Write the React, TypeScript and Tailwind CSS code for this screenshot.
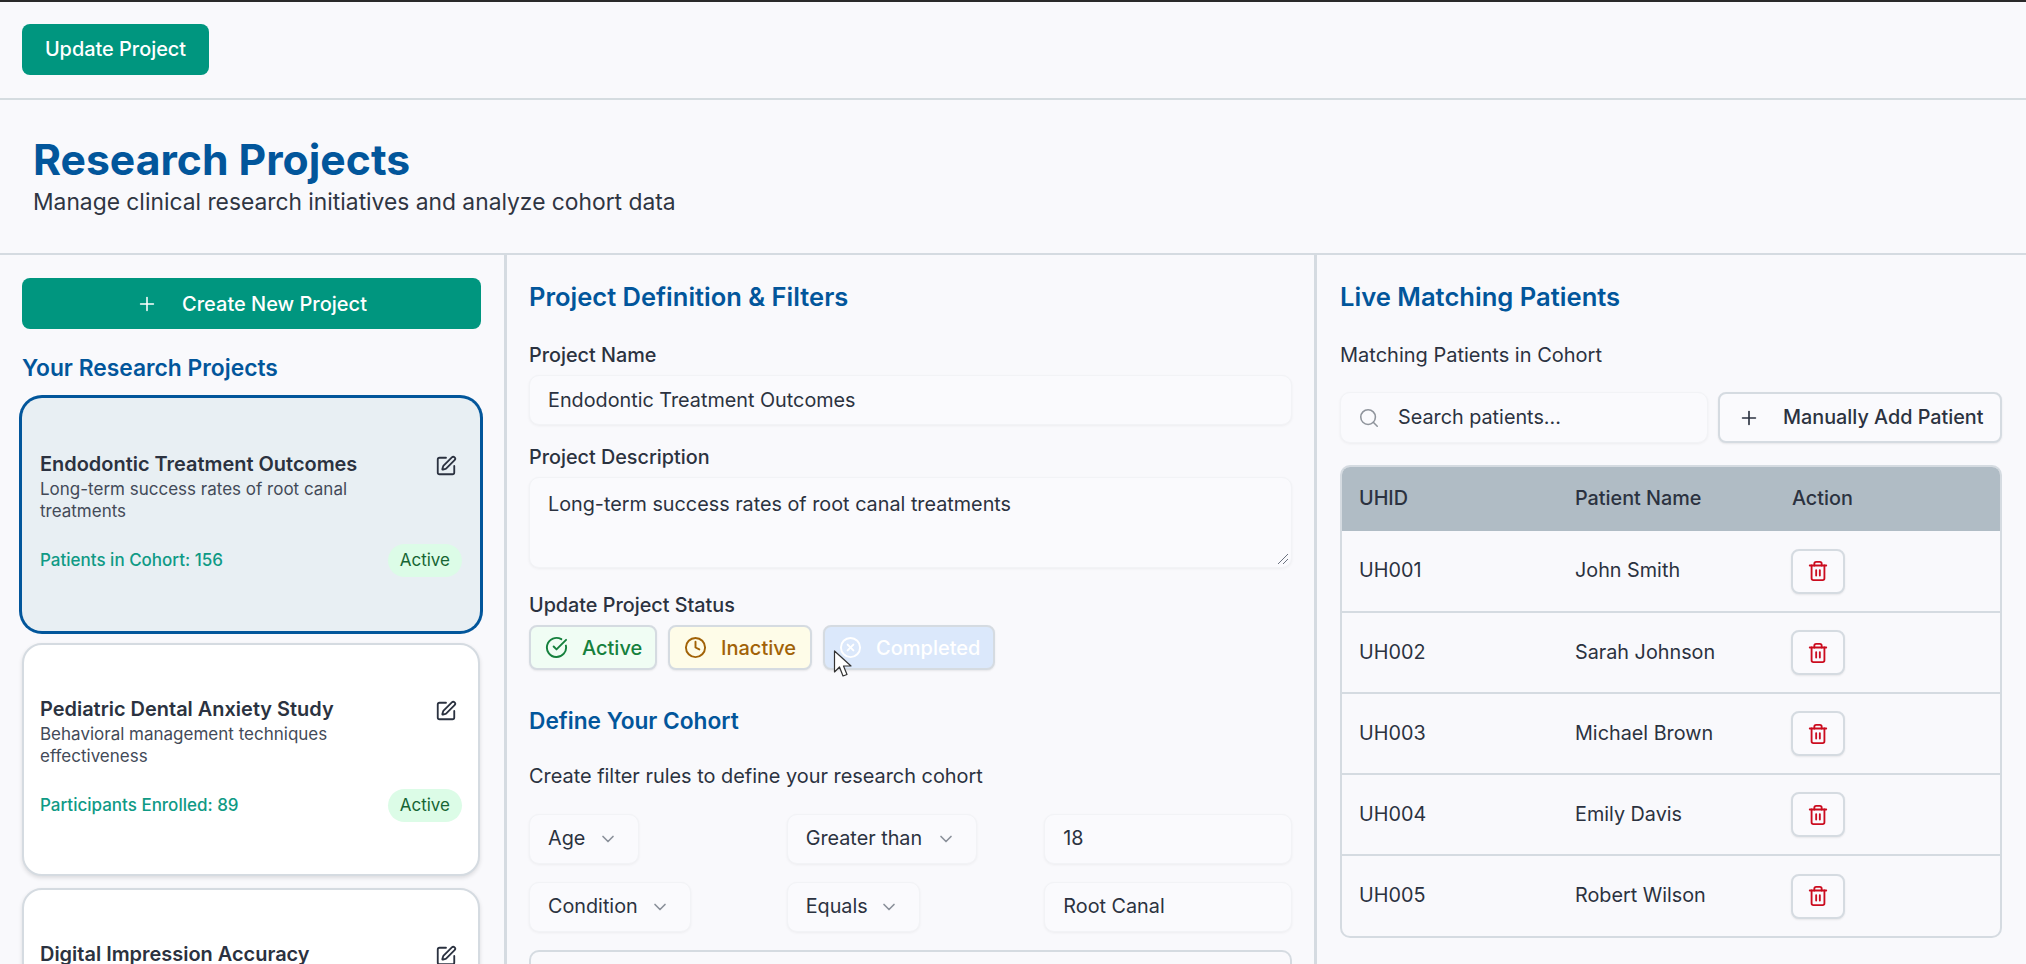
import { Plus, SquarePen, CircleCheckBig, Clock, CircleX, Search, ChevronDown, Trash2 } from "lucide-react";

const font = { fontFamily: "Inter, 'Noto Sans', sans-serif" };

function Card({ title, desc, stat, selected }: { title: string; desc?: string; stat?: string; selected?: boolean }) {
  return (
    <div
      className={
        "h-[233px] shrink-0 rounded-[20px] flex flex-col " +
        (selected
          ? "bg-[#e8eff3] ring-[3px] ring-[#02569b] px-[18px] pt-[54px]"
          : "bg-white border-2 border-[#d5dbe1] shadow-[0_2px_4px_rgba(0,0,0,0.12)] px-[16px] pt-[52px]")
      }
    >
      <div className="flex justify-between items-start">
        <div className="w-[340px]">
          <div className="text-[19.95px] leading-[24px] font-semibold text-[#2b3240]">{title}</div>
          {desc && <div className="text-[17px] leading-[22px] text-[#434a58] mt-[2px]">{desc}</div>}
        </div>
        <SquarePen size={22} strokeWidth={2} className="text-[#2b3240] mt-[3px] mr-[5px] shrink-0" />
      </div>
      {stat && (
        <div className="flex justify-between items-center mt-[22px]">
          <span className="text-[17px] font-medium text-[#0f9a85]">{stat}</span>
          <span className="h-[33px] px-[12px] rounded-full bg-[#dcfce7] text-[#166534] text-[17px] flex items-center">Active</span>
        </div>
      )}
    </div>
  );
}

function Box({ children, className }: { children: React.ReactNode; className?: string }) {
  return (
    <div className={"h-[50px] rounded-[10px] bg-[#fafafd] border border-[#f2f3f6] shadow-[0_1px_3px_rgba(0,0,0,0.05)] px-[18px] flex items-center text-[#2b3240] text-[19.8px] " + (className ?? "")}>
      {children}
    </div>
  );
}

function Sel({ label, width }: { label: string; width: string }) {
  return (
    <Box className={width + " justify-between pr-[20px]"}>
      <span>{label}</span>
      <ChevronDown size={20} className="text-[#8a909a]" />
    </Box>
  );
}

export default function App() {
  const rows = [
    ["UH001", "John Smith"],
    ["UH002", "Sarah Johnson"],
    ["UH003", "Michael Brown"],
    ["UH004", "Emily Davis"],
    ["UH005", "Robert Wilson"],
  ];
  return (
    <div style={font} className="w-[2026px] h-[964px] overflow-hidden bg-[#f9f9fc] flex flex-col relative">
      <div className="h-[2px] bg-[#2a2a2a] shrink-0" />
      <div className="h-[98px] shrink-0 border-b-2 border-[#d5dce0] px-[22px] pt-[22px]">
        <button className="w-[187px] h-[51px] rounded-[8px] bg-[#00967f] text-white text-[19.9px] font-medium">Update Project</button>
      </div>
      <div className="h-[155px] shrink-0 border-b-2 border-[#d5dbe1] pl-[33px] pt-[33px]">
        <h1 className="text-[42.7px] leading-[54px] font-bold text-[#02569b]">Research Projects</h1>
        <p className="text-[22.8px] leading-[26px] text-[#2f3542] mt-[2px]">Manage clinical research initiatives and analyze cohort data</p>
      </div>
      <div className="flex flex-1 min-h-0">
        <div className="w-[507px] shrink-0 border-r-[3px] border-[#d5dbe1] px-[22px] pt-[23px] pr-[25px] flex flex-col overflow-hidden">
          <button className="h-[51px] w-[459px] shrink-0 rounded-[8px] bg-[#00967f] text-white text-[20px] font-medium flex items-center justify-center gap-[24px]">
            <Plus size={22} strokeWidth={1.7} />
            Create New Project
          </button>
          <h2 className="mt-[25px] text-[22.8px] leading-[28px] font-semibold text-[#02569b]">Your Research Projects</h2>
          <div className="mt-[16px] w-[458px] flex flex-col gap-[12px]">
            <Card selected title="Endodontic Treatment Outcomes" desc="Long-term success rates of root canal treatments" stat="Patients in Cohort: 156" />
            <Card title="Pediatric Dental Anxiety Study" desc="Behavioral management techniques effectiveness" stat="Participants Enrolled: 89" />
            <Card title="Digital Impression Accuracy" />
          </div>
        </div>

        <div className="w-[810px] shrink-0 border-r-[3px] border-[#d5dbe1] pl-[22px] pr-[22px] pt-[26px] overflow-hidden">
          <h2 className="text-[25.5px] leading-[32px] font-semibold text-[#02569b]">Project Definition &amp; Filters</h2>
          <div className="mt-[30px] text-[19.8px] leading-[24px] font-medium text-[#2b3240]">Project Name</div>
          <Box className="mt-[8px] pt-[1px]">Endodontic Treatment Outcomes</Box>
          <div className="mt-[20px] text-[19.8px] leading-[24px] font-medium text-[#2b3240]">Project Description</div>
          <div className="mt-[8px] h-[91px] rounded-[10px] bg-[#fafafd] border border-[#f2f3f6] shadow-[0_1px_3px_rgba(0,0,0,0.05)] px-[18px] pt-[14px] text-[#2b3240] text-[19.8px] leading-[24px] relative">
            Long-term success rates of root canal treatments
            <svg width="12" height="12" viewBox="0 0 12 12" className="absolute right-[2px] bottom-[2px]" fill="none" stroke="#6b7280" strokeWidth="1">
              <path d="M1 11 L11 1 M6 11 L11 6" />
            </svg>
          </div>
          <div className="mt-[25px] text-[19.8px] leading-[24px] font-medium text-[#2b3240]">Update Project Status</div>
          <div className="mt-[8px] flex gap-[11px]">
            <div className="h-[45px] w-[128px] rounded-[8px] border-2 border-[#d5dbe1] bg-[#f0fdf4] text-[#15803d] text-[20px] font-medium flex items-center gap-[14px] pl-[14px] shadow-[0_1px_2px_rgba(0,0,0,0.08)]">
              <CircleCheckBig size={23} strokeWidth={2} />Active
            </div>
            <div className="h-[45px] w-[144px] rounded-[8px] border-2 border-[#d5dbe1] bg-[#fefce8] text-[#a16207] text-[20px] font-medium flex items-center gap-[14px] pl-[14px] shadow-[0_1px_2px_rgba(0,0,0,0.08)]">
              <Clock size={23} strokeWidth={2} />Inactive
            </div>
            <div className="h-[45px] w-[172px] rounded-[8px] border-2 border-[#d5dbe1] bg-[#dbe8fb] text-white text-[20px] font-medium flex items-center gap-[14px] pl-[14px] shadow-[0_1px_2px_rgba(0,0,0,0.08)]">
              <CircleX size={23} strokeWidth={2} />Completed
            </div>
          </div>
          <h3 className="mt-[37px] text-[22.7px] leading-[28px] font-semibold text-[#02569b]">Define Your Cohort</h3>
          <div className="mt-[29px] text-[19.9px] leading-[24px] text-[#2b3240]">Create filter rules to define your research cohort</div>
          <div className="mt-[26px] grid grid-cols-3 gap-x-[10px] gap-y-[18px]">
            <Sel label="Age" width="w-[110px]" />
            <Sel label="Greater than" width="w-[190px]" />
            <Box>18</Box>
            <Sel label="Condition" width="w-[162px]" />
            <Sel label="Equals" width="w-[133px]" />
            <Box>Root Canal</Box>
          </div>
          <div className="mt-[18px] h-[60px] rounded-t-[10px] border-2 border-[#d5dbe1]" />
        </div>

        <div className="flex-1 min-w-0 pl-[23px] pr-[24px] pt-[26px]">
          <h2 className="text-[25.6px] leading-[32px] font-semibold text-[#02569b]">Live Matching Patients</h2>
          <div className="mt-[30px] text-[20px] leading-[24px] text-[#2b3240]">Matching Patients in Cohort</div>
          <div className="mt-[25px] flex gap-[10px]">
            <Box className="w-[368px] h-[51px] pl-[17px] gap-[18px]">
              <Search size={22} strokeWidth={1.7} className="text-[#8f949c]" />
              <span>Search patients...</span>
            </Box>
            <button className="w-[284px] h-[51px] rounded-[8px] border-2 border-[#d5dbe1] bg-[#fafafd] shadow-[0_1px_2px_rgba(0,0,0,0.08)] text-[#2b3240] text-[19.8px] font-medium flex items-center gap-[23px] pl-[18px]">
              <Plus size={22} strokeWidth={1.8} />
              Manually Add Patient
            </button>
          </div>
          <div className="mt-[22px] w-[662px] rounded-[10px] border-2 border-[#d5dbe1] overflow-hidden">
            <table className="w-full table-fixed text-[19.8px] text-[#2b3240]">
              <thead>
                <tr className="h-[64px] bg-[#b0bcc5] text-left">
                  <th className="w-[216px] pl-[17px] font-medium">UHID</th>
                  <th className="w-[217px] pl-[17px] font-medium">Patient Name</th>
                  <th className="pl-[17px] font-medium">Action</th>
                </tr>
              </thead>
              <tbody>
                {rows.map(([id, name], i) => (
                  <tr key={id} className={"h-[81px] " + (i < rows.length - 1 ? "border-b-2 border-[#d5dbe1]" : "")}>
                    <td className="pl-[17px]">{id}</td>
                    <td className="pl-[17px]">{name}</td>
                    <td className="pl-[16px]">
                      <div className="w-[54px] h-[45px] rounded-[8px] border-2 border-[#d5dbe1] bg-[#fafafd] flex items-center justify-center shadow-[0_1px_2px_rgba(0,0,0,0.08)]">
                        <Trash2 size={22} strokeWidth={2} className="text-[#cb0c1f]" />
                      </div>
                    </td>
                  </tr>
                ))}
              </tbody>
            </table>
          </div>
        </div>
      </div>
      <svg className="absolute left-[833px] top-[650px]" width="20" height="28" viewBox="0 0 20 28">
        <path d="M1.5 1 L1.5 22 L6.5 17 L10 26 L14 24.5 L10.5 16 L18 16 Z" fill="#ffffff" stroke="#333" strokeWidth="1.2" strokeLinejoin="round" />
      </svg>
    </div>
  );
}
